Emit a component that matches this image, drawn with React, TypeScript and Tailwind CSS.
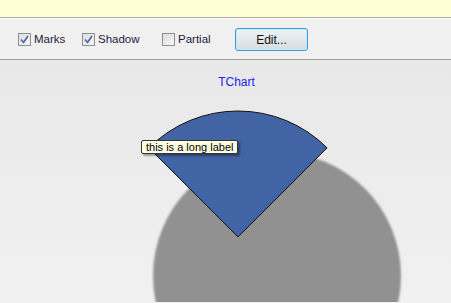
import React from "react";

function Check({ checked, label, className = "" }: { checked: boolean; label: string; className?: string }) {
  return (
    <div className={"flex items-center gap-[3px] " + className}>
      <div className="w-[13px] h-[13px] border border-[#8f8f8f] bg-gradient-to-br from-[#dcdcdc] to-[#f8f8f8] flex items-center justify-center">
        {checked && (
          <svg width="9" height="9" viewBox="0 0 9 9">
            <path d="M1 4.5 L3.5 7.5 L8 1" fill="none" stroke="#4a5fa8" strokeWidth="1.6" />
          </svg>
        )}
      </div>
      <span className="text-[11.5px] text-[#1c1c3a] leading-none">{label}</span>
    </div>
  );
}

export default function App() {
  return (
    <div className="w-[451px] h-[303px] overflow-hidden flex flex-col" style={{ fontFamily: "'Liberation Sans', Arial, sans-serif" }}>
      <div className="h-[17px] bg-[#ffffd6]" />
      <div className="h-px bg-[#a8a8a8]" />
      <div className="h-px bg-white" />
      <div className="h-[41px] bg-[#f0f0f0] flex items-center pl-[18px] pt-[1px] border-b border-[#a0a0a0]">
        <Check checked label="Marks" className="w-[64px]" />
        <Check checked label="Shadow" className="w-[80px]" />
        <Check checked={false} label="Partial" className="w-[73px]" />
        <div className="w-[73px] h-[23px] rounded-[3px] border border-[#3c9bd6] bg-gradient-to-b from-[#eef3f6] to-[#d6dde2] shadow-[inset_0_0_0_1px_#c8ecff] flex items-center justify-center text-[12px] text-[#111]">
          Edit...
        </div>
      </div>
      <div className="relative flex-1 bg-gradient-to-b from-[#e8e8e8] to-[#f1f1f1] flex flex-col items-center">
        <div className="pt-[15px] text-[12px] text-[#2222ee] leading-[14px] ml-[22px]">TChart</div>
        <svg width="451" height="242" className="absolute left-0 top-0">
          <defs>
            <filter id="blur" x="-10%" y="-10%" width="120%" height="120%">
              <feGaussianBlur stdDeviation="1.2" />
            </filter>
          </defs>
          <circle cx="277" cy="216" r="124" fill="#919191" filter="url(#blur)" />
          <path d="M238,177 L148.9,87.9 A126,126 0 0 1 327.1,87.9 Z" fill="#4264a4" stroke="#111" strokeWidth="1" />
        </svg>
        <div className="absolute left-[141px] top-[80px] w-[97px] h-[14px] bg-[#ffffe1] border border-[#333] rounded-[2px] shadow-[2px_2px_2px_rgba(0,0,0,0.35)] text-[11px] leading-[12px] text-black pl-[4px]">
          this is a long label
        </div>
      </div>
    </div>
  );
}
